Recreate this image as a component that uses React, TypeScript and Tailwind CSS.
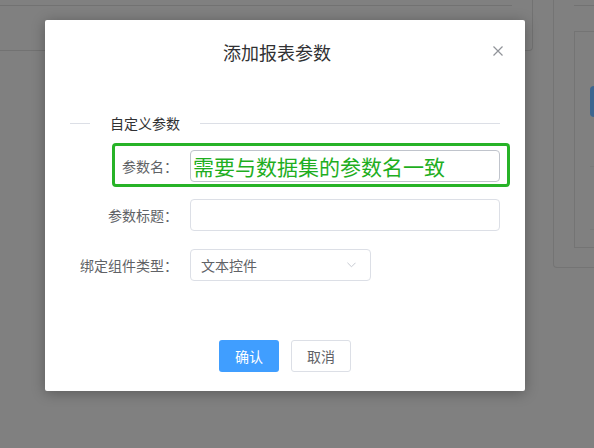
import React from 'react';

const font = { fontFamily: '"Noto Sans CJK SC", "Liberation Sans", sans-serif' };

function FormRow({ label, children, className = '' }: { label: string; children: React.ReactNode; className?: string }) {
  return (
    <div className={`relative flex items-center h-[32px] ${className}`}>
      <div className="w-[145px] pr-[12px] text-right text-[14px] text-[#606266] leading-[32px]">{label}</div>
      {children}
    </div>
  );
}

export default function App() {
  return (
    <div className="relative w-[594px] h-[448px] overflow-hidden bg-[#808080]" style={font}>
      {/* page behind the mask */}
      <div className="flex">
        <div className="w-[533px] shrink-0 h-[51px] border-r border-b border-[#727272] rounded-br-[4px]">
          <div className="w-[512px] h-[6px] border-b border-[#727272]"></div>
        </div>
        <div className="ml-[20px] flex-1 h-[268px] border-l border-b border-[#747474] rounded-bl-[4px] pl-[20px]">
          <div className="h-[6px] border-b border-[#727272]"></div>
          <div className="mt-[25px] h-[217px] border-l border-t border-b border-[#747474] pl-[15px]">
            <div className="mt-[54px] w-[10px] h-[31px] rounded-l-[4px] bg-[#3d6690]"></div>
            <div className="mt-[49px] h-px bg-[#7a7a7a]"></div>
            <div className="mt-[62px] h-px bg-[#7a7a7a]"></div>
          </div>
        </div>
      </div>

      {/* dialog */}
      <div className="absolute left-[45px] top-[20px] w-[480px] h-[371px] bg-white rounded-[2px] shadow-[0_2px_14px_rgba(0,0,0,0.3)] flex flex-col">
        <div className="pt-[20px] pr-[16px] text-center text-[18px] leading-[24px] text-[#303133]">添加报表参数</div>
        <button className="absolute right-[22px] top-[26px] w-[10px] h-[10px] text-[#909399]">
          <svg viewBox="0 0 10 10" className="w-[10px] h-[10px]" fill="none" stroke="currentColor" strokeWidth="1.2">
            <path d="M0.5 0.5L9.5 9.5M9.5 0.5L0.5 9.5" />
          </svg>
        </button>

        {/* divider */}
        <div className="mt-[49px] flex items-center pl-[25px] pr-[25px]">
          <div className="w-[20px] h-px bg-[#dcdfe6]"></div>
          <div className="px-[20px] text-[14px] leading-[20px] text-[#303133]">自定义参数</div>
          <div className="flex-1 h-px bg-[#dcdfe6]"></div>
        </div>

        <div className="mt-[17px]">
          <FormRow label="参数名：" className="mb-[17px]">
            <div className="w-[310px] h-[32px] border border-[#c0c4cc] rounded-[4px] flex items-center pl-[2px]">
              <span className="text-[21px] leading-[28px] text-[#1fae1f]">需要与数据集的参数名一致</span>
            </div>
            {/* annotation box */}
            <div className="absolute left-[67px] top-[-7px] w-[398px] h-[44px] border-[3px] border-[#27b327] rounded-[4px] pointer-events-none"></div>
          </FormRow>
          <FormRow label="参数标题：" className="mb-[18px]">
            <div className="w-[310px] h-[32px] border border-[#dcdfe6] rounded-[4px]"></div>
          </FormRow>
          <FormRow label="绑定组件类型：">
            <div className="w-[181px] h-[32px] border border-[#dcdfe6] rounded-[4px] flex items-center justify-between pl-[10px] pr-[14px]">
              <span className="text-[14px] text-[#606266]">文本控件</span>
              <svg viewBox="0 0 10 6" className="w-[9px] h-[6px]" fill="none" stroke="#c0c4cc" strokeWidth="1">
                <path d="M0.5 0.5L5 5L9.5 0.5" />
              </svg>
            </div>
          </FormRow>
        </div>

        <div className="mt-auto pb-[19px] flex justify-center gap-[12px]">
          <button className="w-[60px] h-[32px] rounded-[3px] bg-[#409eff] text-white text-[14px]">确认</button>
          <button className="w-[60px] h-[32px] rounded-[3px] border border-[#dcdfe6] bg-white text-[#606266] text-[14px]">取消</button>
        </div>
      </div>
    </div>
  );
}
